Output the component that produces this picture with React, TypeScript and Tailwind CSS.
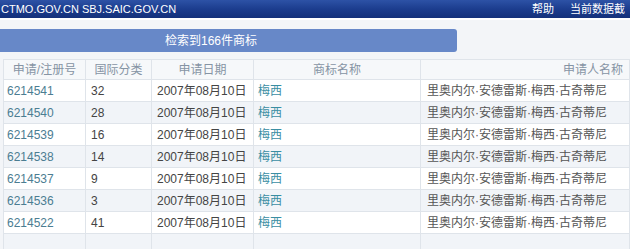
import React from 'react';

const rows = [
  { no: '6214541', cls: '32' },
  { no: '6214540', cls: '28' },
  { no: '6214539', cls: '16' },
  { no: '6214538', cls: '14' },
  { no: '6214537', cls: '9' },
  { no: '6214536', cls: '3' },
  { no: '6214522', cls: '41' },
];

const cols = 'grid grid-cols-[82px_66px_102px_167px_1fr] grid-rows-[100%]';
const cell = 'border-r border-b border-[#dfe4ea] flex items-center whitespace-nowrap overflow-hidden';

export default function App() {
  return (
    <div
      className="w-[630px] h-[249px] overflow-hidden bg-[#f3f5f8] text-[12px]"
      style={{ fontFamily: '"Liberation Sans", "Noto Sans CJK SC", sans-serif' }}
    >
      {/* Top bar */}
      <div className="h-[18px] bg-gradient-to-b from-[#2d52a6] via-[#1c3d8e] to-[#14307a] flex items-center text-white leading-none whitespace-nowrap overflow-hidden">
        <span className="w-[532px] shrink-0 pl-[1px] text-[11px]">CTMO.GOV.CN SBJ.SAIC.GOV.CN</span>
        <span className="shrink-0 text-[11px]">帮助</span>
        <span className="shrink-0 ml-[16px] text-[11px]">当前数据截</span>
      </div>
      <div className="h-[2px] bg-white" />

      {/* Result banner */}
      <div className="pt-[9px] pb-[7px]">
        <div className="w-[461px] h-[23px] -ml-[4px] pl-[169px] rounded-[3px] bg-[#6788c8] text-white flex items-center">
          检索到166件商标
        </div>
      </div>

      {/* Table */}
      <div className="ml-[3px] border-l border-t border-[#dfe4ea] bg-white">
        <div className={`${cols} h-[20px] bg-[#f6f8fa] text-[#8694a4]`}>
          <div className={`${cell} justify-center`}>申请/注册号</div>
          <div className={`${cell} justify-center`}>国际分类</div>
          <div className={`${cell} justify-center`}>申请日期</div>
          <div className={`${cell} justify-center`}>商标名称</div>
          <div className={`${cell} justify-end pr-[6px]`}>申请人名称</div>
        </div>
        {rows.map((r, i) => (
          <div
            key={r.no}
            className={`${cols} h-[22px] ${i % 2 === 1 ? 'bg-[#f1f4f8]' : 'bg-white'}`}
          >
            <div className={`${cell} pl-[3px] text-[#4b7d92]`}>{r.no}</div>
            <div className={`${cell} pl-[5px] text-[#444]`}>{r.cls}</div>
            <div className={`${cell} pl-[5px] text-[#444]`}>2007年08月10日</div>
            <div className={`${cell} pl-[4px] text-[#3a8ea3]`}>梅西</div>
            <div className={`${cell} pl-[6px] text-[#555]`}>里奥内尔·安德雷斯·梅西·古奇蒂尼</div>
          </div>
        ))}
        <div className={`${cols} h-[22px] bg-[#f1f4f8]`}>
          <div className={cell} />
          <div className={cell} />
          <div className={cell} />
          <div className={cell} />
          <div className={cell} />
        </div>
      </div>
    </div>
  );
}
